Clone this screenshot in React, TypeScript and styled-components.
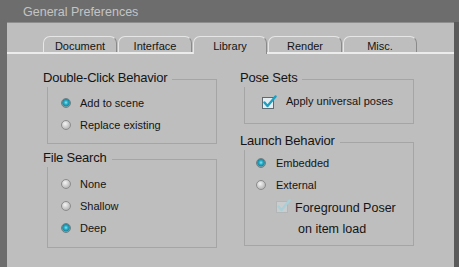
import React from "react";
import styled, { createGlobalStyle } from "styled-components";

const GlobalStyle = createGlobalStyle`
  html, body {
    margin: 0;
    padding: 0;
    background: #6d6d6d;
  }
  body {
    font-family: "Liberation Sans", Arial, sans-serif;
    color: #141414;
  }
`;

const Window = styled.div`
  width: 459px;
  height: 267px;
  overflow: hidden;
  display: flex;
  flex-direction: column;
  background: #6d6d6d;
`;

const TitleBar = styled.div`
  height: 22px;
  padding: 1px 0 0 23px;
  display: flex;
  align-items: center;
  color: #c4c4c4;
  font-size: 12.5px;
  box-sizing: border-box;
`;

const Frame = styled.div`
  flex: 1;
  display: flex;
  padding: 0 5px 0 7px;
  background: linear-gradient(to right, #6d6d6d 0 454px, #5a5a5a 454px);
`;

const Panel = styled.div`
  flex: 1;
  display: flex;
  flex-direction: column;
  background: #bebebe;
  border-top: 1px solid #8e8e8e;
`;

const TabBar = styled.div`
  display: flex;
  align-items: flex-end;
  height: 31px;
  padding-left: 36px;
  border-bottom: 2px solid #ececec;
  box-sizing: border-box;
`;

const Tab = styled.div<{ $active?: boolean }>`
  width: 74px;
  height: ${(p) => (p.$active ? "18px" : "16px")};
  margin-right: 1px;
  margin-bottom: ${(p) => (p.$active ? "-2px" : "0")};
  padding-top: 3px;
  box-sizing: border-box;
  border: 1px solid;
  border-color: #e6e6e6 #8a8a8a transparent #e6e6e6;
  border-bottom: none;
  border-radius: 7px 7px 0 0;
  background: #bebebe;
  font-size: 11px;
  line-height: 12px;
  text-align: center;
  color: #141414;
`;

const Content = styled.div`
  display: grid;
  grid-template-columns: 174px 174px;
  column-gap: 23px;
  padding: 17px 0 0 36px;
`;

const Column = styled.div`
  display: flex;
  flex-direction: column;
`;

const Group = styled.fieldset<{ $mt?: number }>`
  margin: ${(p) => p.$mt ?? 0}px 0 0 4px;
  padding: 0;
  width: 170px;
  box-sizing: border-box;
  border: 1px solid #a5a5a5;
  min-width: 0;
`;

const Caption = styled.legend`
  margin-left: -5px;
  padding: 0 5px 3px 0;
  font-size: 13px;
  line-height: 13px;
  letter-spacing: -0.2px;
  background: #bebebe;
`;

const Options = styled.div<{ $pt: number; $pb: number; $pl: number }>`
  display: flex;
  flex-direction: column;
  padding: ${(p) => p.$pt}px 0 ${(p) => p.$pb}px ${(p) => p.$pl}px;
`;

const Row = styled.div<{ $gap?: number }>`
  height: 22px;
  display: flex;
  align-items: center;
  gap: ${(p) => p.$gap ?? 9}px;
  font-size: 11px;
`;

const Radio = styled.span<{ $on?: boolean }>`
  width: 10px;
  height: 10px;
  border-radius: 50%;
  box-sizing: border-box;
  border: 1px solid ${(p) => (p.$on ? "#6f7f82" : "#8c8c8c")};
  background: ${(p) =>
    p.$on
      ? "radial-gradient(circle at 50% 45%, #8fe6f5 0, #2ab0cc 30%, #1a8aa3 55%, #9aa8aa 75%, #c8c8c8 100%)"
      : "radial-gradient(circle at 40% 35%, #f4f4f4 0, #cfcfcf 45%, #a4a4a4 100%)"};
  flex: none;
`;

const CheckRow = styled.div<{ $indent: number }>`
  display: flex;
  gap: 4px;
  margin: 2px 0 0 ${(p) => p.$indent}px;
`;

const CheckLabel = styled.div`
  font-size: 12.5px;
  line-height: 21px;
  span {
    display: block;
    padding-left: 3px;
  }
`;

const CheckIcon = styled.svg`
  flex: none;
  margin-top: 1px;
`;

function CheckBox({ faded }: { faded?: boolean }) {
  return (
    <CheckIcon width="15" height="14" viewBox="0 0 15 14">
      <rect
        x="0.5"
        y="2.5"
        width="11"
        height="11"
        fill={faded ? "#c9cdce" : "#e4eef2"}
        stroke={faded ? "#b2b6b7" : "#5e6a70"}
      />
      <path
        d="M2.5 7.5 L5.5 11 L13.5 1.5"
        fill="none"
        stroke={faded ? "#a9cfd8" : "#1c9fc0"}
        strokeWidth="2.4"
        strokeLinecap="round"
        strokeLinejoin="round"
      />
    </CheckIcon>
  );
}

const tabs = ["Document", "Interface", "Library", "Render", "Misc."];

export default function App() {
  return (
    <Window>
      <GlobalStyle />
      <TitleBar>General Preferences</TitleBar>
      <Frame>
        <Panel>
          <TabBar>
            {tabs.map((t) => (
              <Tab key={t} $active={t === "Library"}>
                {t}
              </Tab>
            ))}
          </TabBar>
          <Content>
            <Column>
              <Group>
                <Caption>Double-Click Behavior</Caption>
                <Options $pt={5} $pb={7} $pl={13}>
                  <Row>
                    <Radio $on />
                    Add to scene
                  </Row>
                  <Row>
                    <Radio />
                    Replace existing
                  </Row>
                </Options>
              </Group>
              <Group $mt={7}>
                <Caption>File Search</Caption>
                <Options $pt={6} $pb={8} $pl={13}>
                  <Row>
                    <Radio />
                    None
                  </Row>
                  <Row>
                    <Radio />
                    Shallow
                  </Row>
                  <Row>
                    <Radio $on />
                    Deep
                  </Row>
                </Options>
              </Group>
            </Column>
            <Column>
              <Group>
                <Caption>Pose Sets</Caption>
                <Options $pt={3} $pb={11} $pl={17}>
                  <Row $gap={9}>
                    <CheckBox />
                    Apply universal poses
                  </Row>
                </Options>
              </Group>
              <Group $mt={10}>
                <Caption>Launch Behavior</Caption>
                <Options $pt={2} $pb={5} $pl={11}>
                  <Row $gap={10}>
                    <Radio $on />
                    Embedded
                  </Row>
                  <Row $gap={10}>
                    <Radio />
                    External
                  </Row>
                  <CheckRow $indent={20}>
                    <CheckBox faded />
                    <CheckLabel>
                      Foreground Poser
                      <span>on item load</span>
                    </CheckLabel>
                  </CheckRow>
                </Options>
              </Group>
            </Column>
          </Content>
        </Panel>
      </Frame>
    </Window>
  );
}
